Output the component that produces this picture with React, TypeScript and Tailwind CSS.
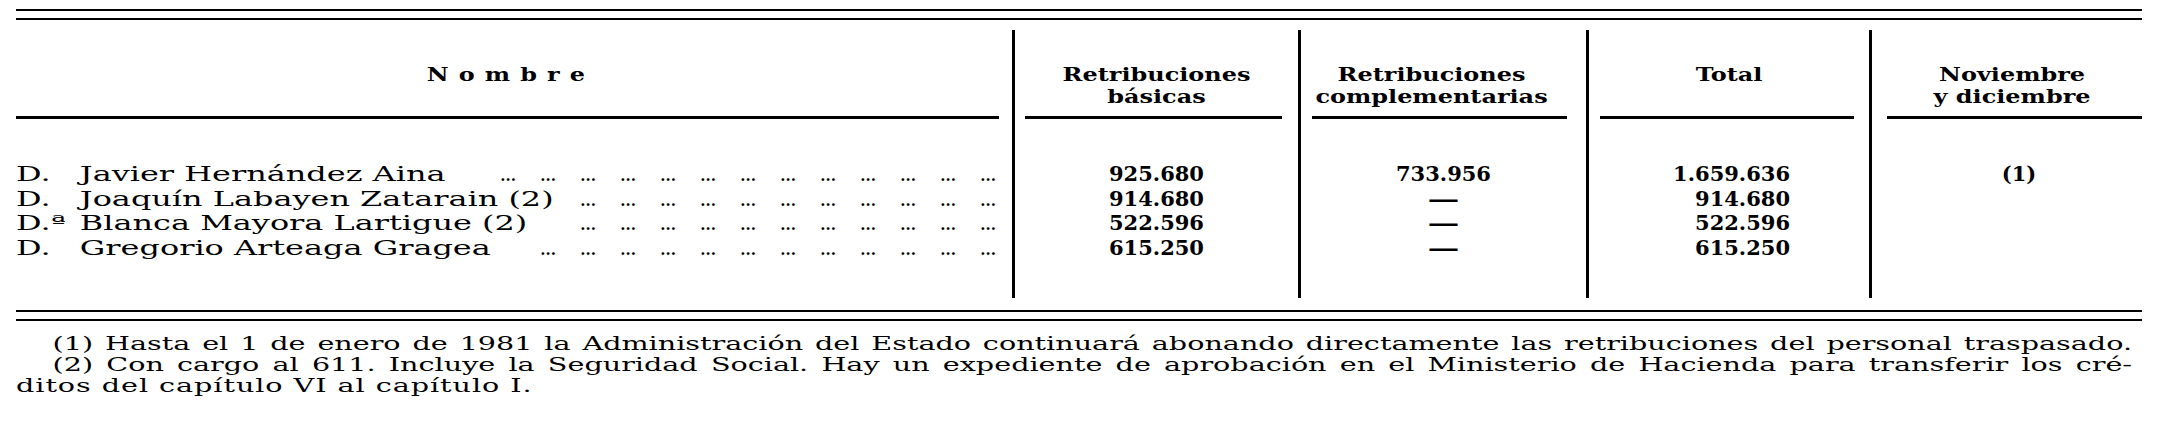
import React from "react";

const names = [
  { pre: "D.", name: "Javier Hernández Aina", dots: 13 },
  { pre: "D.", name: "Joaquín Labayen Zatarain (2)", dots: 11 },
  { pre: "D.ª", name: "Blanca Mayora Lartigue (2)", dots: 11 },
  { pre: "D.", name: "Gregorio Arteaga Gragea", dots: 12 },
];

const basicas = ["925.680", "914.680", "522.596", "615.250"];
const complementarias = ["733.956", "—", "—", "—"];
const totales = ["1.659.636", "914.680", "522.596", "615.250"];

const note1 =
  "(1) Hasta el 1 de enero de 1981 la Administración del Estado continuará abonando directamente las retribuciones del personal traspasado.".split(
    " "
  );
const note2 =
  "(2) Con cargo al 611. Incluye la Seguridad Social. Hay un expediente de aprobación en el Ministerio de Hacienda para transferir los cré-".split(
    " "
  );

function Rule() {
  return <div className="h-[2px] bg-black" />;
}

function JustifiedLine({ words }: { words: string[] }) {
  return (
    <div className="flex justify-between gap-x-[5px] pl-[23px] whitespace-nowrap">
      {words.map((w, i) => (
        <span key={i}>{w}</span>
      ))}
    </div>
  );
}

export default function App() {
  return (
    <div className="w-[2163px] h-[437px] bg-white text-black overflow-hidden font-['DejaVu_Serif','Liberation_Serif',serif]">
      <div className="ml-[16px] w-[2126px] pt-[9px]">
        <Rule />
        <div className="h-[7px]" />
        <Rule />

        <div className="grid grid-cols-[996px_3px_283px_3px_285px_3px_280px_3px_270px] grid-rows-[96px_3px_179px]">
          {/* header cells */}
          <div className="col-start-1 row-start-1 pt-[43px]">
            <div className="scale-x-[1.26] text-center pr-[13px] text-[19px] leading-[22px] font-bold">
              <span className="tracking-[8px] pl-[8px]">Nombre</span>
            </div>
          </div>
          <div className="col-start-3 row-start-1 pt-[43px]">
            <div className="scale-x-[1.26] text-center text-[19px] leading-[22px] font-bold">
              <div>Retribuciones</div>
              <div>básicas</div>
            </div>
          </div>
          <div className="col-start-5 row-start-1 pt-[43px]">
            <div className="scale-x-[1.26] text-center text-[19px] leading-[22px] font-bold pr-[19px]">
              <div>Retribuciones</div>
              <div>complementarias</div>
            </div>
          </div>
          <div className="col-start-7 row-start-1 pt-[43px]">
            <div className="scale-x-[1.26] text-center text-[19px] leading-[22px] font-bold">
              <div>Total</div>
            </div>
          </div>
          <div className="col-start-9 row-start-1 pt-[43px]">
            <div className="scale-x-[1.26] text-center text-[19px] leading-[22px] font-bold pl-[8px]">
              <div>Noviembre</div>
              <div>y diciembre</div>
            </div>
          </div>

          {/* vertical dividers */}
          <div className="col-start-2 row-start-1 row-span-3 mt-[10px] bg-black" />
          <div className="col-start-4 row-start-1 row-span-3 mt-[10px] bg-black" />
          <div className="col-start-6 row-start-1 row-span-3 mt-[10px] bg-black" />
          <div className="col-start-8 row-start-1 row-span-3 mt-[10px] bg-black" />

          {/* header rule segments */}
          <div className="col-start-1 row-start-2 bg-black mr-[13px]" />
          <div className="col-start-3 row-start-2 bg-black ml-[10px] mr-[16px]" />
          <div className="col-start-5 row-start-2 bg-black ml-[11px] mr-[19px]" />
          <div className="col-start-7 row-start-2 bg-black ml-[11px] mr-[15px]" />
          <div className="col-start-9 row-start-2 bg-black ml-[15px]" />

          {/* body: names */}
          <div className="col-start-1 row-start-3 pt-[43px] pr-[16px]">
            {names.map((r, i) => (
              <div key={i} className="flex items-baseline h-[24.5px] text-[21px] leading-[24.5px]">
                <span className="inline-block origin-left scale-x-[1.52] whitespace-nowrap">
                  <span className="inline-block w-[42px]">{r.pre}</span>
                  {r.name}
                </span>
                <span className="ml-auto flex items-baseline">
                  {Array.from({ length: r.dots }).map((_, j) => (
                    <span key={j} className="w-[40px] text-right text-[15px] font-bold">
                      ...
                    </span>
                  ))}
                </span>
              </div>
            ))}
          </div>

          {/* body: basicas */}
          <div className="col-start-3 row-start-3 pt-[43px] flex flex-col items-center">
            {basicas.map((v, i) => (
              <div key={i} className="h-[24.5px] text-[21px] leading-[24.5px] font-bold">
                {v}
              </div>
            ))}
          </div>

          {/* body: complementarias */}
          <div className="col-start-5 row-start-3 pt-[43px] flex flex-col items-center">
            {complementarias.map((v, i) => (
              <div key={i} className="h-[24.5px] text-[21px] leading-[24.5px] font-bold">
                <span className={v === "—" ? "inline-block scale-x-[1.5]" : ""}>{v}</span>
              </div>
            ))}
          </div>

          {/* body: total */}
          <div className="col-start-7 row-start-3 pt-[43px] flex flex-col items-end pr-[79px]">
            {totales.map((v, i) => (
              <div key={i} className="h-[24.5px] text-[21px] leading-[24.5px] font-bold">
                {v}
              </div>
            ))}
          </div>

          {/* body: noviembre */}
          <div className="col-start-9 row-start-3 pt-[43px] flex flex-col items-center pl-[24px]">
            <div className="h-[24.5px] text-[21px] leading-[24.5px] font-bold">(1)</div>
          </div>
        </div>

        <div className="h-[12px]" />
        <Rule />
        <div className="h-[7px]" />
        <Rule />

        <div className="pt-[12px]">
          <div className="w-[1331px] origin-left scale-x-[1.59] text-[18px] leading-[21px]">
            <JustifiedLine words={note1} />
            <JustifiedLine words={note2} />
            <div className="tracking-[0.6px] whitespace-nowrap">ditos del capítulo VI al capítulo I.</div>
          </div>
        </div>
      </div>
    </div>
  );
}
